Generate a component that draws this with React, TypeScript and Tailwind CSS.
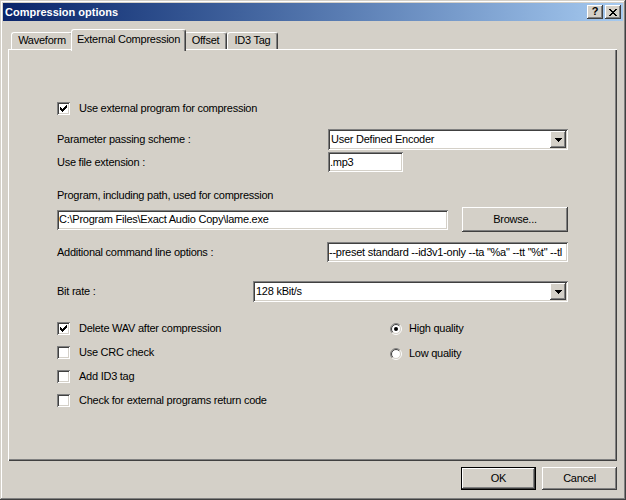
import React from "react";

const RAISED =
  "shadow-[inset_-1px_-1px_#404040,inset_1px_1px_#ffffff,inset_-2px_-2px_#808080,inset_2px_2px_#d4d0c8]";
const SUNKEN =
  "shadow-[inset_1px_1px_#808080,inset_-1px_-1px_#ffffff,inset_2px_2px_#404040,inset_-2px_-2px_#d4d0c8]";

function Check() {
  // 7x7 pixel check mark
  const px: [number, number, number][] = [
    [6, 0, 1],
    [5, 1, 2],
    [0, 2, 1],
    [4, 2, 3],
    [0, 3, 2],
    [3, 3, 3],
    [0, 4, 5],
    [1, 5, 3],
    [2, 6, 1],
  ];
  return (
    <svg width="7" height="7" viewBox="0 0 7 7" shapeRendering="crispEdges">
      {px.map(([x, y, w], i) => (
        <rect key={i} x={x} y={y} width={w} height={1} fill="#000" />
      ))}
    </svg>
  );
}

function Checkbox({ checked, label }: { checked?: boolean; label: string }) {
  return (
    <div className="flex h-[13px] items-center">
      <span className={`flex h-[13px] w-[13px] shrink-0 items-center justify-center bg-white ${SUNKEN}`}>
        {checked && <Check />}
      </span>
      <span className="ml-[9px] leading-[13px]">{label}</span>
    </div>
  );
}

function Radio({ checked, label }: { checked?: boolean; label: string }) {
  const arc = (r: number, a: string, b: string) => {
    const d = r * 0.7071;
    const A = `${6 - d} ${6 + d}`;
    const B = `${6 + d} ${6 - d}`;
    return (
      <>
        <path d={`M${A} A${r} ${r} 0 0 1 ${B}`} stroke={a} fill="none" />
        <path d={`M${B} A${r} ${r} 0 0 1 ${A}`} stroke={b} fill="none" />
      </>
    );
  };
  return (
    <div className="flex h-[13px] items-center">
      <svg width="12" height="12" viewBox="0 0 12 12" className="shrink-0">
        <circle cx="6" cy="6" r="4.5" fill="#fff" />
        {arc(5.5, "#808080", "#ffffff")}
        {arc(4.5, "#404040", "#d4d0c8")}
        {checked && <circle cx="6" cy="6" r="2" fill="#000" />}
      </svg>
      <span className="ml-[7px] leading-[13px]">{label}</span>
    </div>
  );
}

function Edit({ value, className }: { value: string; className: string }) {
  return (
    <div className={`flex h-[20px] items-center overflow-hidden whitespace-nowrap bg-white pl-[2px] ${SUNKEN} ${className}`}>
      <span className="leading-[13px]">{value}</span>
    </div>
  );
}

function Combo({ value, className }: { value: string; className: string }) {
  return (
    <div className={`flex h-[21px] items-center justify-between bg-white p-[2px] ${SUNKEN} ${className}`}>
      <span className="pl-[1px] leading-[13px]">{value}</span>
      <span className={`flex h-[17px] w-[16px] items-center justify-center bg-[#d4d0c8] ${RAISED}`}>
        <svg width="7" height="4" viewBox="0 0 7 4" shapeRendering="crispEdges">
          <rect x="0" y="0" width="7" height="1" fill="#000" />
          <rect x="1" y="1" width="5" height="1" fill="#000" />
          <rect x="2" y="2" width="3" height="1" fill="#000" />
          <rect x="3" y="3" width="1" height="1" fill="#000" />
        </svg>
      </span>
    </div>
  );
}

function Button({ label, className, isDefault }: { label: string; className: string; isDefault?: boolean }) {
  return (
    <div
      className={`flex items-center justify-center bg-[#d4d0c8] leading-[13px] ${
        isDefault
          ? "border border-black shadow-[inset_-1px_-1px_#404040,inset_1px_1px_#ffffff,inset_-2px_-2px_#808080]"
          : RAISED
      } ${className}`}
    >
      {label}
    </div>
  );
}

function Tab({ label, selected, className }: { label: string; selected?: boolean; className: string }) {
  return (
    <div
      className={`flex items-start justify-center rounded-t-[3px] border-t border-l border-r border-t-white border-l-white border-r-[#404040] bg-[#d4d0c8] shadow-[inset_-1px_0_#808080] ${
        selected ? "relative z-10 -mx-[2px] -mb-[2px] h-[22px] pt-[3px]" : "h-[17px] pt-[1px]"
      } ${className}`}
    >
      <span className="leading-[13px]">{label}</span>
    </div>
  );
}

function CloseGlyph() {
  const rows = ["XX....XX", ".XX..XX.", "..XXXX..", "...XX...", "..XXXX..", ".XX..XX.", "XX....XX"];
  return (
    <svg width="8" height="7" viewBox="0 0 8 7" shapeRendering="crispEdges">
      {rows.flatMap((r, y) =>
        r.split("").map((c, x) => (c === "X" ? <rect key={`${x}-${y}`} x={x} y={y} width={1} height={1} fill="#000" /> : null)),
      )}
    </svg>
  );
}

export default function App() {
  return (
    <div className="h-[500px] w-[626px] bg-[#d4d0c8] p-[3px] font-['Liberation_Sans',Arial,sans-serif] text-[11px] tracking-[-0.25px] text-black shadow-[inset_-1px_-1px_#404040,inset_1px_1px_#d4d0c8,inset_-2px_-2px_#808080,inset_2px_2px_#ffffff]">
      {/* Title bar */}
      <div className="flex h-[18px] items-center justify-between bg-gradient-to-r from-[#0a246a] to-[#a6caf0] pr-[2px] pl-[2px]">
        <span className="text-[11px] leading-[13px] font-bold tracking-normal text-white">Compression options</span>
        <div className="flex gap-[2px]">
          <span className={`flex h-[14px] w-[16px] items-center justify-center bg-[#d4d0c8] pb-[1px] text-[11px] leading-[11px] font-bold tracking-normal ${RAISED}`}>
            ?
          </span>
          <span className={`flex h-[14px] w-[16px] items-center justify-center bg-[#d4d0c8] ${RAISED}`}>
            <CloseGlyph />
          </span>
        </div>
      </div>

      <div className="flex flex-col pt-[8px] pr-[6px] pl-[5px]">
        {/* Tabs */}
        <div className="flex h-[20px] items-end pl-[3px]">
          <Tab label="Waveform" className="w-[62px]" />
          <Tab label="External Compression" selected className="w-[115px]" />
          <Tab label="Offset" className="w-[43px]" />
          <Tab label="ID3 Tag" className="w-[51px]" />
        </div>

        {/* Panel */}
        <div className="flex h-[412px] flex-col bg-[#d4d0c8] px-[49px] pt-[53px] shadow-[inset_1px_1px_#ffffff,inset_-1px_-1px_#404040,inset_-2px_-2px_#808080]">
          <Checkbox checked label="Use external program for compression" />

          <div className="mt-[14px] flex h-[21px] items-center">
            <span className="w-[271px] leading-[13px]">Parameter passing scheme :</span>
            <Combo value="User Defined Encoder" className="w-[240px]" />
          </div>

          <div className="mt-[2px] flex h-[20px] items-center">
            <span className="w-[271px] leading-[13px]">Use file extension :</span>
            <Edit value=".mp3" className="w-[75px]" />
          </div>

          <div className="mt-[17px] h-[13px] leading-[13px]">Program, including path, used for compression</div>

          <div className="mt-[5px] flex h-[25px] items-center justify-between">
            <Edit value="C:\Program Files\Exact Audio Copy\lame.exe" className="w-[391px]" />
            <Button label="Browse..." className="h-[25px] w-[106px]" />
          </div>

          <div className="mt-[10px] flex h-[20px] items-center">
            <span className="w-[270px] leading-[13px]">Additional command line options :</span>
            <Edit value={'--preset standard --id3v1-only --ta "%a" --tt "%t" --tl'} className="w-[241px]" />
          </div>

          <div className="mt-[19px] flex h-[21px] items-center">
            <span className="w-[196px] leading-[13px]">Bit rate :</span>
            <Combo value="128 kBit/s" className="w-[315px]" />
          </div>

          <div className="mt-[20px] flex">
            <div className="flex w-[333px] flex-col gap-[11px]">
              <Checkbox checked label="Delete WAV after compression" />
              <Checkbox label="Use CRC check" />
              <Checkbox label="Add ID3 tag" />
              <Checkbox label="Check for external programs return code" />
            </div>
            <div className="flex flex-col gap-[12px]">
              <Radio checked label="High quality" />
              <Radio label="Low quality" />
            </div>
          </div>
        </div>

        {/* Dialog buttons */}
        <div className="mt-[6px] flex justify-end gap-[6px]">
          <Button label="OK" isDefault className="h-[23px] w-[75px]" />
          <Button label="Cancel" className="h-[23px] w-[75px]" />
        </div>
      </div>
    </div>
  );
}
